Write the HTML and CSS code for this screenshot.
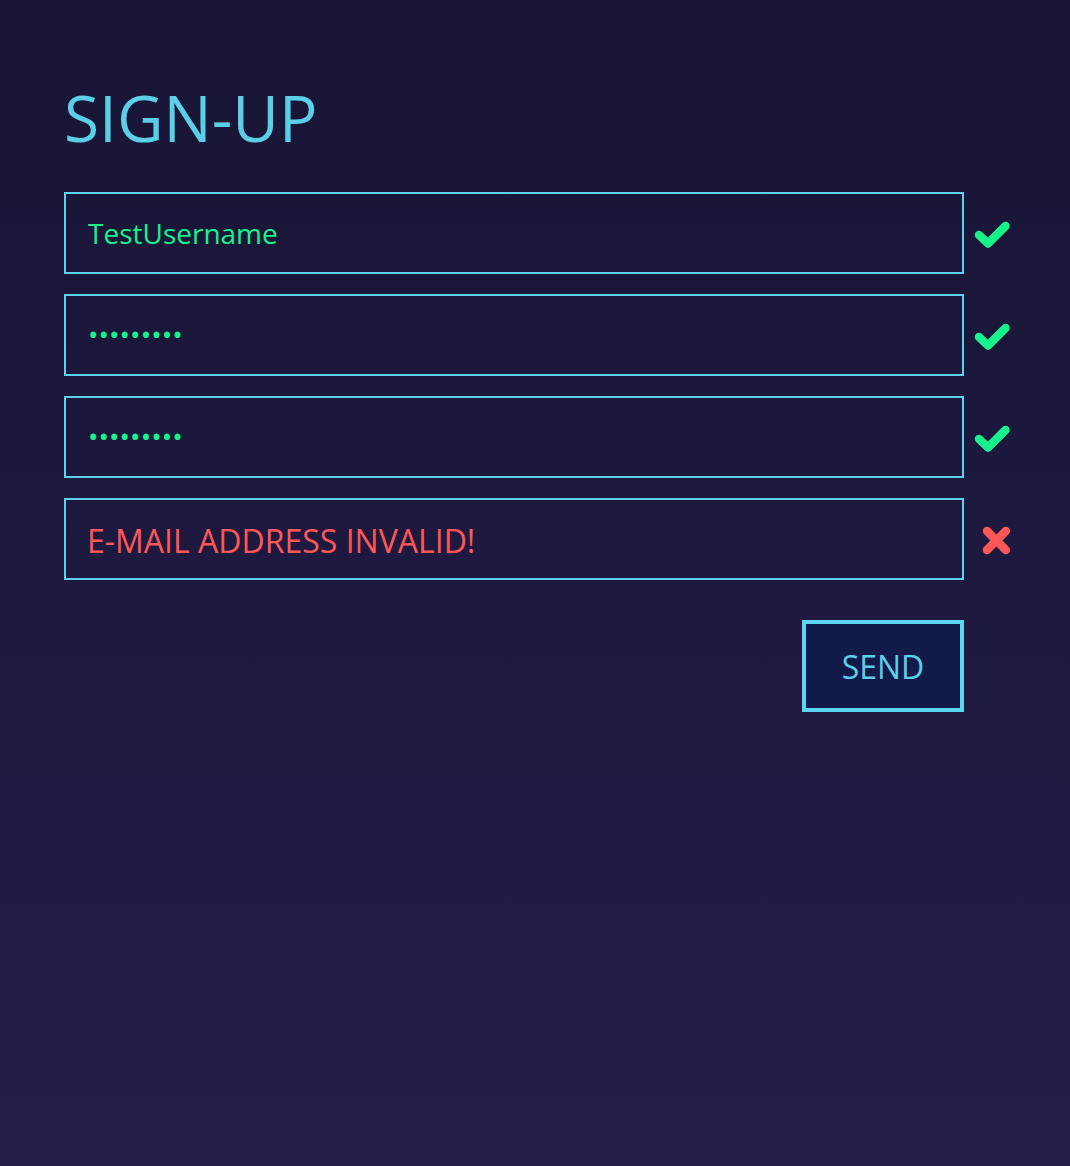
FILE: index.html
```html
<!DOCTYPE html>
<html lang="en">
<head>
<meta charset="utf-8">
<title>Sign-up</title>
<link rel="stylesheet" href="styles.css">
</head>
<body>
<main class="page">
  <h1 class="title">SIGN-UP</h1>
  <form class="form">
    <div class="row">
      <div class="field"><span class="value ok">TestUsername</span></div>
      <svg class="icon" width="46" height="40" viewBox="0 0 46 40"><polyline points="9,21 18,29.5 35.5,12" fill="none" stroke="#17f28b" stroke-width="8.5" stroke-linecap="round" stroke-linejoin="round"/></svg>
    </div>
    <div class="row">
      <div class="field"><span class="value ok dots">•••••••••</span></div>
      <svg class="icon" width="46" height="40" viewBox="0 0 46 40"><polyline points="9,21 18,29.5 35.5,12" fill="none" stroke="#17f28b" stroke-width="8.5" stroke-linecap="round" stroke-linejoin="round"/></svg>
    </div>
    <div class="row">
      <div class="field"><span class="value ok dots">•••••••••</span></div>
      <svg class="icon" width="46" height="40" viewBox="0 0 46 40"><polyline points="9,21 18,29.5 35.5,12" fill="none" stroke="#17f28b" stroke-width="8.5" stroke-linecap="round" stroke-linejoin="round"/></svg>
    </div>
    <div class="row">
      <div class="field"><span class="value error">E-MAIL ADDRESS INVALID!</span></div>
      <svg class="icon" width="46" height="40" viewBox="0 0 46 40"><path d="M17,11.1 L35.8,29.9 M35.8,11.1 L17,29.9" fill="none" stroke="#ff5757" stroke-width="8.5" stroke-linecap="round"/></svg>
    </div>
    <div class="actions">
      <button type="button" class="send">SEND</button>
    </div>
  </form>
</main>
</body>
</html>
```
FILE: styles.css
```css
html, body {
  margin: 0;
  padding: 0;
  height: 100%;
}
body {
  background: linear-gradient(to bottom, #181535 0%, #231d4a 100%);
  font-family: "Open Sans", "DejaVu Sans", sans-serif;
  min-height: 1166px;
}
.page {
  padding: 79px 0 0 64px;
}
.title {
  margin: 0;
  font-size: 64px;
  font-weight: 400;
  line-height: 77px;
  color: #5bcfe8;
}
.form {
  margin-top: 36px;
  display: flex;
  flex-direction: column;
  gap: 20px;
  width: 900px;
}
.row {
  display: flex;
  align-items: center;
  width: 960px;
}
.field {
  box-sizing: border-box;
  width: 900px;
  height: 82px;
  border: 2px solid #5bd2ec;
  display: flex;
  align-items: center;
  padding-left: 22px;
}
.value {
  font-size: 28px;
  line-height: 1;
}
.ok { color: #17f28b; }
.dots { position: relative; top: -1px; }
.error {
  color: #ff5757;
  font-size: 32px;
  position: relative;
  top: 2px;
  margin-left: -1px;
}
.icon {
  display: block;
  margin-left: 6px;
  margin-top: 2px;
}
.actions {
  display: flex;
  justify-content: flex-end;
  margin-top: 20px;
}
.send {
  box-sizing: border-box;
  width: 162px;
  height: 92px;
  border: 4px solid #5bd5f0;
  background: #121a4a;
  color: #5bcfe8;
  font-family: "Open Sans", "DejaVu Sans", sans-serif;
  font-size: 32px;
  padding: 0;
  cursor: pointer;
}
```
